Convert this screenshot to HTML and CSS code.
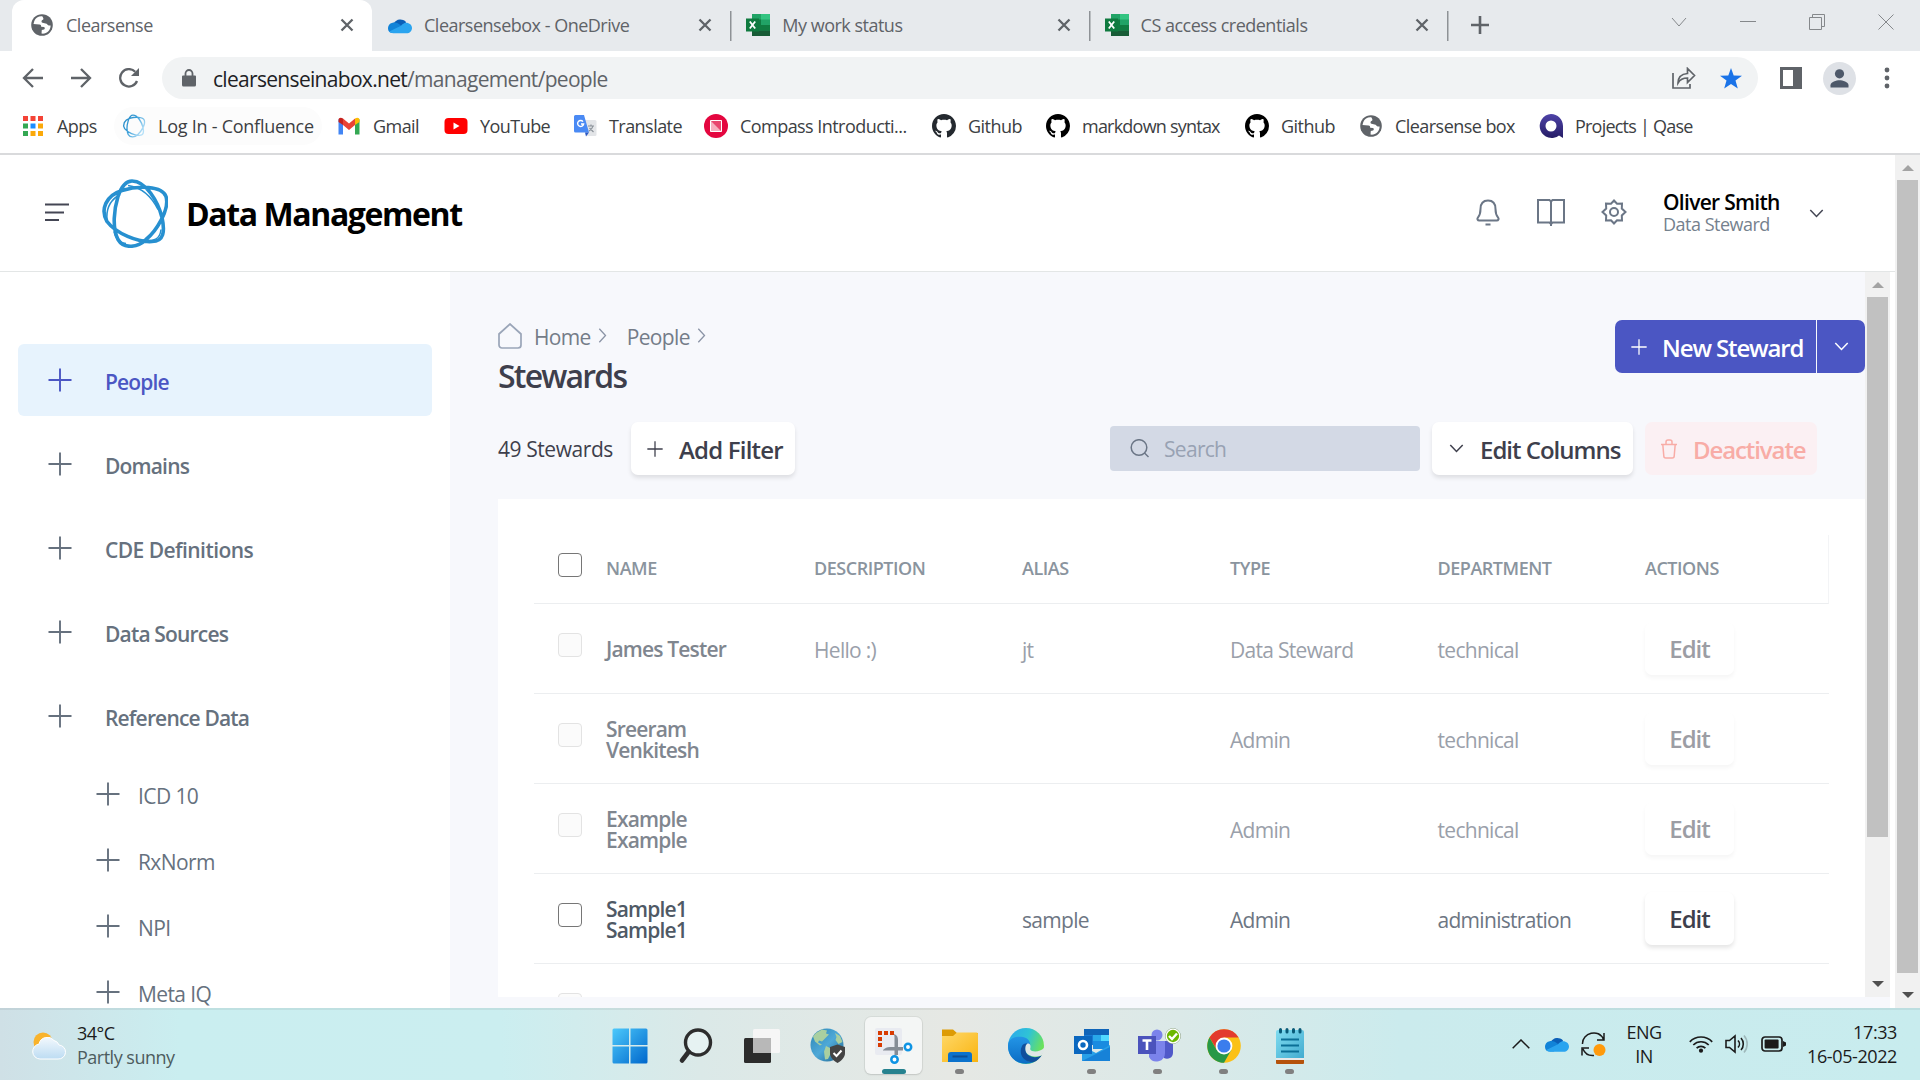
FILE: index.html
```html
<!DOCTYPE html>
<html lang="en">
<head>
<meta charset="utf-8">
<title>Clearsense</title>
<link rel="stylesheet" href="styles.css">
</head>
<body>
<svg class="defs" width="0" height="0" aria-hidden="true">
  <defs>
    <linearGradient id="g-win" x1="0" y1="0" x2="1" y2="1"><stop offset="0" stop-color="#4cc9fb"/><stop offset="1" stop-color="#0067cc"/></linearGradient>
    <linearGradient id="g-folder" x1="0" y1="0" x2="1" y2="1"><stop offset="0" stop-color="#ffd869"/><stop offset="1" stop-color="#f9b410"/></linearGradient>
    <linearGradient id="g-edge" x1="0" y1="0" x2="1" y2=".4"><stop offset="0" stop-color="#2aa6ee"/><stop offset=".55" stop-color="#2fc3d6"/><stop offset="1" stop-color="#6be25a"/></linearGradient>
    <linearGradient id="g-edge2" x1="0" y1="0" x2="0" y2="1"><stop offset="0" stop-color="#2395e6"/><stop offset="1" stop-color="#0b6cc4"/></linearGradient>
    <linearGradient id="g-globe" x1="0" y1="0" x2="1" y2="1"><stop offset="0" stop-color="#2a84b4"/><stop offset=".5" stop-color="#4fa9d8"/><stop offset="1" stop-color="#1d628c"/></linearGradient>
    <linearGradient id="g-note" x1="0" y1="0" x2="1" y2="1"><stop offset="0" stop-color="#7fdcf0"/><stop offset="1" stop-color="#43acd0"/></linearGradient>
    <linearGradient id="g-qase" x1="0" y1="0" x2="0" y2="1"><stop offset="0" stop-color="#4e43a8"/><stop offset="1" stop-color="#261d66"/></linearGradient>
    <linearGradient id="g-cloud" x1="0" y1="0" x2="0" y2="1"><stop offset="0" stop-color="#f3f8fd"/><stop offset="1" stop-color="#bcdcf2"/></linearGradient>
    <linearGradient id="g-ring" x1="0" y1="0" x2="1" y2=".6"><stop offset="0" stop-color="#2287c4"/><stop offset=".5" stop-color="#3d9fd8"/><stop offset="1" stop-color="#b5e0f8"/></linearGradient>
    <symbol id="i-globe" viewBox="0 0 24 24"><circle cx="12" cy="12" r="10.8" fill="#5f6368"/><path d="M12.5 3.4C9 2.8 5.500 5 4.300 8L3.500 11l6 .6c1.500.2 1.800 1 1.600 2.200l2.900.2c1 .2 1.200 2 0 2.400l-2.200.6-.3 3.600c5 .8 9.300-3.600 9.100-8.100l-2-.1c-1-.2-1.400-1.600-3-1.800l-3.100-.8c-1.600-.6-1.200-2.700.4-3.100 1-.4.6-1.600-.4-3.300z" fill="#fff"/></symbol>
    <symbol id="i-x" viewBox="0 0 14 14"><path d="M1.500 1.500l11 11M12.500 1.500l-11 11" stroke="#5f6368" stroke-width="2.300"/></symbol>
    <symbol id="i-cloud" viewBox="0 0 24 16"><path d="M6 5.500A7 6 0 0 1 18 4.500L16 11H5z" fill="#0a5fb8"/><path d="M0 11C0 7 3 5 6.500 5c2.500 0 4 1 6.500 3l-4 7.500H5C2 15.500 0 14 0 11z" fill="#1183d8"/><path d="M18 5.200c3.500 0 6 2.300 6 5.200 0 3-2.300 5.300-5.500 5.300H5.200c-1.800 0-3-.5-3.900-1.600L13 8.300c1.500-1.800 3-3.100 5-3.100z" fill="#2aa4ef"/></symbol>
    <symbol id="i-excel" viewBox="0 0 24 22"><path d="M6 0h18v22H6z" fill="#21a366"/><path d="M15 0h9v5.500h-9z" fill="#33c481"/><path d="M6 5.500h9V11H6z" fill="#107c41"/><path d="M6 11h18v5.500H6z" fill="#107c41"/><path d="M6 16.500h18V22H6z" fill="#185c37"/><path d="M0 4.500h13v13H0z" fill="#0f7a3f"/><path d="M3.800 7.500l5.400 7M9.200 7.500l-5.400 7" stroke="#fff" stroke-width="1.800"/></symbol>
    <symbol id="i-github" viewBox="0 0 16 16"><path d="M8 0C3.580 0 0 3.580 0 8c0 3.540 2.290 6.530 5.470 7.590.4.070.55-.17.55-.38 0-.19-.01-.82-.01-1.490-2.010.37-2.530-.49-2.690-.94-.09-.23-.48-.94-.82-1.130-.28-.15-.68-.52-.01-.53.63-.01 1.080.58 1.230.82.72 1.210 1.870.87 2.330.66.07-.52.28-.87.51-1.070-1.780-.2-3.640-.89-3.640-3.950 0-.87.31-1.590.82-2.150-.08-.2-.36-1.020.08-2.120 0 0 .67-.21 2.200.82.64-.18 1.320-.27 2-.27s1.360.09 2 .27c1.530-1.040 2.200-.82 2.200-.82.44 1.100.16 1.920.08 2.120.51.56.82 1.270.82 2.150 0 3.070-1.870 3.750-3.650 3.950.29.25.54.73.54 1.480 0 1.070-.01 1.930-.01 2.200 0 .21.15.46.55.38A8.010 8.010 0 0 0 16 8c0-4.420-3.580-8-8-8z" fill="currentColor"/></symbol>
    <symbol id="i-plus" viewBox="0 0 24 24"><path d="M12 .5v23M.5 12h23" stroke="currentColor" stroke-width="1.900"/></symbol>
    <symbol id="i-down" viewBox="0 0 14 9"><path d="M.8 1l6.200 6.500L13.200 1" fill="none" stroke="currentColor" stroke-width="1.500"/></symbol>
    <symbol id="i-right" viewBox="0 0 8 15"><path d="M.8.800l6.200 6.700L.8 14.200" fill="none" stroke="currentColor" stroke-width="1.300"/></symbol>
  </defs>
</svg>

<header class="tabs">
  <div class="tab tab-active"><svg width="24" height="24"><use href="#i-globe"/></svg><span class="tab-title">Clearsense</span><svg width="14" height="14"><use href="#i-x"/></svg></div>
  <div class="tab"><svg width="24" height="17"><use href="#i-cloud"/></svg><span class="tab-title">Clearsensebox - OneDrive</span><svg width="14" height="14"><use href="#i-x"/></svg></div>
  <div class="tab tab-sep"><svg width="24" height="22"><use href="#i-excel"/></svg><span class="tab-title">My work status</span><svg width="14" height="14"><use href="#i-x"/></svg></div>
  <div class="tab tab-sep"><svg width="24" height="22"><use href="#i-excel"/></svg><span class="tab-title">CS access credentials</span><svg width="14" height="14"><use href="#i-x"/></svg></div>
  <div class="new-tab"><svg width="18" height="18" viewBox="0 0 18 18"><path d="M9 0v18M0 9h18" stroke="#5f6368" stroke-width="2.600"/></svg></div>
  <div class="win-buttons">
    <svg width="16" height="16" viewBox="0 0 16 16"><path d="M1 4l7 8 7-8"/></svg>
    <svg width="16" height="16" viewBox="0 0 16 16"><path d="M0 7.500h16"/></svg>
    <svg width="16" height="16" viewBox="0 0 16 16"><path d="M.5 3.500h12v12H.5zM3.500 3.500V.5h12v12h-3"/></svg>
    <svg width="16" height="16" viewBox="0 0 16 16"><path d="M.5.500l15 15M15.500.500l-15 15"/></svg>
  </div>
</header>

<div class="toolbar">
  <div class="nav-buttons">
    <svg width="22" height="20" viewBox="0 0 22 20"><path d="M21 10H2M11 1l-9 9 9 9"/></svg>
    <svg width="22" height="20" viewBox="0 0 22 20"><path d="M1 10h19M11 1l9 9-9 9"/></svg>
    <svg width="22" height="20" viewBox="0 0 22 20"><path d="M19 13a8.700 8.700 0 1 1-1.800-9.200"/><path d="M21 0v8h-8z" fill="#5f6368" stroke="none"/></svg>
  </div>
  <div class="omnibox">
    <svg width="14" height="18" viewBox="0 0 14 18"><path d="M1 6.500h12a1 1 0 0 1 1 1V16a1.500 1.500 0 0 1-1.500 1.500h-11A1.500 1.500 0 0 1 0 16V7.500a1 1 0 0 1 1-1z" fill="#5f6368"/><path d="M3.500 7V4.500a3.500 3.500 0 0 1 7 0V7" fill="none" stroke="#5f6368" stroke-width="1.800"/></svg>
    <span class="url">clearsenseinabox.net<span class="path">/management/people</span></span>
    <svg width="24" height="22" viewBox="0 0 24 22"><path d="M1 6v15h17v-4M6 16c0-6 4-9 9.500-9.500V1.500l7 7-7 7v-4.500C11 11 8 12.500 6 16z" fill="none" stroke="#5f6368" stroke-width="1.700"/></svg>
    <svg class="star" width="22" height="21" viewBox="0 0 22 21"><path d="M11 0l2.700 7.400 8.300.3-6.500 4.900 2.300 8L11 16l-6.800 4.600 2.300-8L0 7.700l8.300-.3z" fill="#1a73e8"/></svg>
  </div>
  <svg class="panel" width="22" height="22" viewBox="0 0 22 22"><path d="M0 0h22v22H0zM3 3v16h10V3z" fill="#5f6368" fill-rule="evenodd"/></svg>
  <svg class="avatar" width="33" height="33" viewBox="0 0 33 33"><circle cx="16.500" cy="16.500" r="16.500" fill="#dee1e6"/><circle cx="16.500" cy="11.800" r="4.600" fill="#4d5869"/><path d="M7.500 25.500v-2.200c0-3.500 6-5 9-5s9 1.500 9 5v2.200z" fill="#4d5869"/></svg>
  <svg class="dots" width="6" height="22" viewBox="0 0 6 22"><circle cx="3" cy="3" r="2.400"/><circle cx="3" cy="11" r="2.400"/><circle cx="3" cy="19" r="2.400"/></svg>
</div>

<nav class="bookmarks">
  <div class="mark"><svg width="24" height="24" viewBox="0 0 24 24"><path d="M1 2h5v5H1zM8.500 2h5v5h-5zM16 2h5v5h-5z" fill="#f44336"/><path d="M1 9.500h5v5H1zM1 17h5v5H1z" fill="#34a853"/><path d="M8.500 9.500h5v5h-5z" fill="#1a8cff"/><path d="M16 9.500h5v5h-5zM8.500 17h5v5h-5zM16 17h5v5h-5z" fill="#fba90a"/></svg><span>Apps</span></div>
  <div class="mark mark-hover"><svg width="24" height="24" viewBox="-2 -2 70 72"><path d="M30 1.500C44 1.500 56 22 60 38C63 52 62 62 50 62C36 63 14 54 5 42C-2 30 4 16 20 11C36 6 60 6 64 17C68 30 54 52 44 60C36 68 22 70 16 60C10 48 12 30 16 17C19 8 24 1.500 30 1.500Z" fill="none" stroke="url(#g-ring)" stroke-width="4"/></svg><span>Log In - Confluence</span></div>
  <div class="mark"><svg width="24" height="24" viewBox="0 0 24 24"><path d="M1.500 5v15.500H6V10z" fill="#4285f4"/><path d="M22.500 5v15.500H18V10z" fill="#34a853"/><path d="M1.500 6c0-2.500 2.500-3 4.500-1.500v6.500L1.500 8z" fill="#c5221f"/><path d="M22.500 6c0-2.500-2.500-3-4.500-1.500v6.500l4.500-3z" fill="#fbbc04"/><path d="M6 4.500l6 5 6-5V11l-6 5-6-5z" fill="#ea4335"/></svg><span>Gmail</span></div>
  <div class="mark"><svg width="24" height="24" viewBox="0 0 24 24"><rect x=".5" y="4" width="23" height="16" rx="4" fill="#f00"/><path d="M9.500 8.500v7l6-3.500z" fill="#fff"/></svg><span>YouTube</span></div>
  <div class="mark"><svg width="24" height="24" viewBox="0 0 24 24"><path d="M9 6h13a1.500 1.500 0 0 1 1.500 1.500v13A1.500 1.500 0 0 1 22 22h-8z" fill="#e3e5e8"/><path d="M2.500 1H11l5 17.500H2.500A1.500 1.500 0 0 1 1 17V2.500A1.500 1.500 0 0 1 2.500 1z" fill="#4a8af4"/><path d="M12 18.500h4l-3 4z" fill="#2b59c3"/><path d="M10 7.600A3 3 0 1 0 10.600 10H8" fill="none" stroke="#fff" stroke-width="1.400"/><path d="M15 12h6M18 10.500V12M20 12c-.5 2.500-2.500 4-4 5M16.500 14l4 4" stroke="#8b9299" stroke-width="1.200" fill="none"/></svg><span>Translate</span></div>
  <div class="mark"><svg width="24" height="24" viewBox="0 0 24 24"><circle cx="12" cy="12" r="12" fill="#e4063f"/><path d="M6.500 6.500h11v11h-11z" fill="#f7aebf"/><path d="M7 7h10.500v10.500z" fill="#e8466f"/><path d="M6.500 6.500h11v11h-11z" fill="none" stroke="#fff"/></svg><span>Compass Introducti...</span></div>
  <div class="mark"><svg class="gh-soft" width="24" height="24"><use href="#i-github"/></svg><span>Github</span></div>
  <div class="mark"><svg class="gh" width="24" height="24"><use href="#i-github"/></svg><span class="snug">markdown syntax</span></div>
  <div class="mark"><svg class="gh" width="24" height="24"><use href="#i-github"/></svg><span>Github</span></div>
  <div class="mark"><svg width="24" height="24"><use href="#i-globe"/></svg><span>Clearsense box</span></div>
  <div class="mark"><svg width="24" height="24" viewBox="0 0 24 24"><path d="M12 0c6.600 0 12 5 12 12v12l-4-2.500A12 12 0 1 1 12 0zm0 6.500a5.500 5.500 0 1 0 0 11 5.500 5.500 0 0 0 0-11z" fill="url(#g-qase)"/></svg><span class="snug">Projects | Qase</span></div>
</nav>

<main class="page">
  <div class="app">
    <header class="app-header">
      <svg class="menu" width="24" height="20" viewBox="0 0 24 20"><path d="M0 1.500h24M0 9.500h19M0 17h14" stroke="#444654" stroke-width="2"/></svg>
      <svg class="logo" width="67" height="69" viewBox="-1 -.5 67 69"><path d="M30 1.500C44 1.500 56 22 60 38C63 52 62 62 50 62C36 63 14 54 5 42C-2 30 4 16 20 11C36 6 60 6 64 17C68 30 54 52 44 60C36 68 22 70 16 60C10 48 12 30 16 17C19 8 24 1.500 30 1.500Z" fill="none" stroke="#2790d0" stroke-width="3.600"/><path d="M26 6C40 8 50 18 56 30M5 40C4 28 9 20 18 15M12 52C14 60 18 64 24 64M40 61C52 62 58 60 59 50M60 40C64 32 65 26 64 18" fill="none" stroke="#2790d0" stroke-width="1.500"/></svg>
      <h1>Data Management</h1>
      <div class="header-icons">
        <svg width="24" height="27" viewBox="0 0 24 27"><path d="M12 1.500c-5 0-7.500 3.500-7.500 8.500 0 5-.8 6.500-2.600 8.600-1 1.200-.3 2.900 1.300 2.900h17.600c1.600 0 2.300-1.700 1.300-2.900-1.800-2.100-2.600-3.600-2.600-8.600 0-5-2.500-8.500-7.500-8.500zM9.500 25.500h5"/></svg>
        <svg width="28" height="28" viewBox="0 0 28 28"><path d="M1 2h11.500L14 3.500 15.500 2H27v22.500H15.500L14 26l-1.500-1.500H1zM14 3v25"/></svg>
        <svg width="26" height="26" viewBox="0 0 26 26"><path d="M13 1.500l3 3.200 5-.2-.2 5L24.500 13l-3.700 3.500.2 5-5-.2-3 3.200-3-3.200-5 .2.200-5L1.500 13l3.700-3.500-.2-5 5 .2z"/><circle cx="13" cy="13" r="4"/></svg>
      </div>
      <div class="user"><strong>Oliver Smith</strong><span>Data Steward</span></div>
      <svg class="user-caret" width="15" height="9"><use href="#i-down"/></svg>
    </header>
    <div class="app-body">
      <aside class="sidebar">
        <a class="nav nav-active"><svg width="24" height="24"><use href="#i-plus"/></svg><span>People</span></a>
        <a class="nav"><svg width="24" height="24"><use href="#i-plus"/></svg><span>Domains</span></a>
        <a class="nav"><svg width="24" height="24"><use href="#i-plus"/></svg><span class="airy">CDE Definitions</span></a>
        <a class="nav"><svg width="24" height="24"><use href="#i-plus"/></svg><span>Data Sources</span></a>
        <a class="nav"><svg width="24" height="24"><use href="#i-plus"/></svg><span>Reference Data</span></a>
        <a class="sub"><svg width="24" height="24"><use href="#i-plus"/></svg><span>ICD 10</span></a>
        <a class="sub"><svg width="24" height="24"><use href="#i-plus"/></svg><span>RxNorm</span></a>
        <a class="sub"><svg width="24" height="24"><use href="#i-plus"/></svg><span>NPI</span></a>
        <a class="sub"><svg width="24" height="24"><use href="#i-plus"/></svg><span>Meta IQ</span></a>
      </aside>
      <section class="content">
        <div class="content-head">
          <div>
            <div class="crumbs">
              <svg class="home" width="24" height="26" viewBox="0 0 24 26"><path d="M1 11L12 1l11 10v11a3 3 0 0 1-3 3H4a3 3 0 0 1-3-3z" fill="none" stroke="#9aa5b8" stroke-width="1.700"/></svg>
              <span>Home</span><svg class="sep" width="9" height="15"><use href="#i-right"/></svg>
              <span class="second">People</span><svg class="sep" width="9" height="15"><use href="#i-right"/></svg>
            </div>
            <h2>Stewards</h2>
          </div>
          <div class="split">
            <button class="main-action"><svg width="16" height="16"><use href="#i-plus"/></svg><span>New Steward</span></button>
            <button class="more"><svg width="15" height="9"><use href="#i-down"/></svg></button>
          </div>
        </div>
        <div class="tools">
          <span class="count">49 Stewards</span>
          <button class="btn add"><svg width="16" height="16"><use href="#i-plus"/></svg><span>Add Filter</span></button>
          <div class="search"><svg width="20" height="19" viewBox="0 0 20 19"><circle cx="9" cy="8.500" r="7.800"/><path d="M14.500 14l4 4"/></svg><span>Search</span></div>
          <button class="btn columns"><svg width="15" height="9"><use href="#i-down"/></svg><span>Edit Columns</span></button>
          <button class="btn deactivate"><svg width="16" height="20" viewBox="0 0 16 20"><path d="M0 5.500h16M5 5V3a2 2 0 0 1 2-2h2a2 2 0 0 1 2 2v2M1.800 5.500l1 11.500a2 2 0 0 0 2 2h6.400a2 2 0 0 0 2-2l1-11.500"/></svg><span>Deactivate</span></button>
        </div>
        <div class="card">
          <div class="row row-head"><i class="check"></i><span>NAME</span><span>DESCRIPTION</span><span>ALIAS</span><span>TYPE</span><span>DEPARTMENT</span><span>ACTIONS</span></div>
          <div class="row off"><i class="check"></i><b>James Tester</b><span>Hello :)</span><span>jt</span><span>Data Steward</span><span>technical</span><button class="edit">Edit</button></div>
          <div class="row off"><i class="check"></i><b>Sreeram<br>Venkitesh</b><span></span><span></span><span>Admin</span><span>technical</span><button class="edit">Edit</button></div>
          <div class="row off"><i class="check"></i><b>Example<br>Example</b><span></span><span></span><span>Admin</span><span>technical</span><button class="edit">Edit</button></div>
          <div class="row"><i class="check"></i><b>Sample1<br>Sample1</b><span></span><span>sample</span><span>Admin</span><span>administration</span><button class="edit">Edit</button></div>
          <div class="row off"><i class="check"></i></div>
        </div>
      </section>
      <div class="scroll scroll-inner"><i class="arrow-up"></i><i class="thumb"></i><i class="arrow-down"></i></div>
    </div>
  </div>
  <div class="scroll scroll-outer"><i class="arrow-up"></i><i class="thumb"></i><i class="arrow-down"></i></div>
</main>

<footer class="taskbar">
  <div class="weather">
    <svg width="34" height="28" viewBox="0 0 34 28"><circle cx="11" cy="10" r="9.500" fill="#f9b32c"/><path d="M8 27a7.500 7.500 0 0 1-1-14.900A8.500 8.500 0 0 1 22 8.500a7 7 0 0 1 5 4.500 7 7 0 0 1-1 14z" fill="url(#g-cloud)" stroke="#fff" stroke-width="1"/></svg>
    <div><span class="temp">34°C</span><span class="sky">Partly sunny</span></div>
  </div>
  <div class="apps">
    <div class="task"><svg width="36" height="36" viewBox="0 0 36 36"><path d="M2 .500h15v16.500H.5V2A1.500 1.500 0 0 1 2 .500zM18.500.500H34A1.500 1.500 0 0 1 35.500 2v15h-17zM.5 18.500H17v17H2A1.500 1.500 0 0 1 .5 34zM18.500 18.500h17V34a1.500 1.500 0 0 1-1.500 1.500H18.500z" fill="url(#g-win)"/></svg></div>
    <div class="task"><svg width="36" height="36" viewBox="0 0 36 36"><circle cx="20" cy="14.500" r="12.500" fill="#e6f2f2" stroke="#2d2d2d" stroke-width="3.400"/><path d="M10.500 24l-6.500 8.500" stroke="#2d2d2d" stroke-width="4.600" stroke-linecap="round"/></svg></div>
    <div class="task"><svg width="36" height="36" viewBox="0 0 36 36"><rect x="0" y="10" width="27" height="25" rx="1.500" fill="#2c2c2c"/><rect x="9" y="1" width="27" height="24" rx="1.500" fill="#f6f6f6"/><path d="M9 10h18v15H9z" fill="#b8b8b8"/></svg></div>
    <div class="task"><svg width="36" height="36" viewBox="0 0 36 36"><circle cx="17" cy="17" r="16.500" fill="url(#g-globe)"/><path d="M6 5l6-3.500 5 1-1 3 3 1-4 4-3 3-3-1-1 2 4 2-2 1-5-4-2-5z" fill="#a9cfa0"/><path d="M16 18l6 3-1 4-3 6-3 .5-1-8z" fill="#a9cfa0"/><path d="M25 5l5 3 2.500 6-4 2-3-4 1-3z" fill="#a9cfa0"/><path d="M20 19l7.500-2.500L35 19v6c0 4-3 7.500-7.500 10C23 32.500 20 29 20 25z" fill="#444"/><path d="M23.500 25l3 3 5-5.500" fill="none" stroke="#fff" stroke-width="2"/></svg></div>
    <div class="task task-active"><svg width="38" height="36" viewBox="0 0 38 36"><rect x="0" y="0" width="27" height="27" rx="2" fill="#e9ebf1"/><path d="M3 3h4v4H3zM9 3h4v4H9zM15 3h4v4h-4zM3 9h4v4H3zM3 15h4v4H3z" fill="#d83b01"/><path d="M19 6c3 1 4 3 4 6v15h-3.500V9zM8 22c2-2 4-3 7-3h13v3.500H8z" fill="#858c95"/><circle cx="33" cy="19" r="3.200" fill="#fff" stroke="#0f94e4" stroke-width="2.500"/><circle cx="19.500" cy="31.500" r="3.200" fill="#fff" stroke="#0f94e4" stroke-width="2.500"/></svg></div>
    <div class="task running"><svg width="36" height="36" viewBox="0 0 36 36"><path d="M0 1.500h11L15 5h21v5H0z" fill="#dd9b05"/><path d="M0 8h11l4-3.500h19.500A1.500 1.500 0 0 1 36 6v28H0z" fill="url(#g-folder)"/><path d="M6 34V27a3 3 0 0 1 3-3h18a3 3 0 0 1 3 3v7z" fill="#0b72cc"/><path d="M10.500 28.500h15" stroke="#0b4f96" stroke-width="2"/></svg></div>
    <div class="task"><svg width="36" height="36" viewBox="0 0 36 36"><circle cx="18" cy="18" r="18" fill="url(#g-edge)"/><path d="M0 18C0 10 8 8 15 9c5 1 8 5 7 9-7-3-10 4-7 10 3 6 8 6 11 6C15 39 0 33 0 18z" fill="url(#g-edge2)"/><path d="M14 18c-4 8 2 17 12 16 3-1 6-4 8-7-6 4-14 2-16-3-1-3 0-6 2-8-3-1-5 0-6 2z" fill="#104f9c"/><path d="M18 24c2 4 10 6 15.500 3.500L36 24V20c-3 3-8 4-12 3-2-1-2-2-1.500-3.500C23 16 21 15 19.500 15.500 17 17 17 21 18 24z" fill="#dfe7e6"/></svg></div>
    <div class="task running"><svg width="36" height="36" viewBox="0 0 36 36"><path d="M10 1h25v16H10z" fill="#0f64b8"/><path d="M10 7h9v10h-9z" fill="#1979d4"/><path d="M19 7h8v6h-8z" fill="#28a8ea"/><path d="M27 7h8v6h-8z" fill="#50d9ff"/><path d="M19 13h16v8H19z" fill="#1a8be0"/><path d="M8 18l14 7 14-8v16H8z" fill="#28a0e8"/><path d="M8 33l28-14v14z" fill="#1782d8"/><path d="M0 8h18v18H0z" fill="#0a67bf"/><circle cx="9" cy="17" r="4" fill="none" stroke="#fff" stroke-width="2.600"/></svg></div>
    <div class="task running teams"><svg width="44" height="36" viewBox="0 0 44 36"><circle cx="19" cy="7" r="5.500" fill="#7b83eb"/><path d="M24 13h11v12a6 6 0 0 1-9 5z" fill="#5059c9"/><path d="M11 13h16v12a8.500 8.500 0 0 1-16 4z" fill="#7b83eb"/><path d="M0 8h18v18H0z" fill="#4b53bc"/><path d="M4.500 12.500h9M9 12.500v9.500" stroke="#fff" stroke-width="2.600"/><circle cx="35" cy="8" r="7.500" fill="#6bb700" stroke="#8d9a90" stroke-width=".8"/><circle cx="35" cy="8" r="6.800" fill="#6bb700" stroke="#fff" stroke-width="1.300"/><path d="M31 8l3 3 5-5.500" fill="none" stroke="#fff" stroke-width="2.400"/></svg></div>
    <div class="task running"><svg width="36" height="36" viewBox="0 0 36 36"><circle cx="18" cy="18" r="16.800" fill="#fbc116"/><path d="M18 9.600h14.600A16.800 16.800 0 0 0 3.500 9.600L11 22z" fill="#e33b2e"/><path d="M3.500 9.600A16.800 16.800 0 0 0 18 34.800L25.300 22 10.700 22z" fill="#279847"/><circle cx="18" cy="18" r="8.400" fill="#fff"/><circle cx="18" cy="18" r="6.600" fill="#3b7ded"/></svg></div>
    <div class="task running"><svg width="36" height="36" viewBox="0 0 36 36"><path d="M4 32h28v3a1 1 0 0 1-1 1H5a1 1 0 0 1-1-1z" fill="#b5530c"/><path d="M4 29h28v3H4z" fill="#e8e8e8"/><path d="M4 4a2 2 0 0 1 2-2h24a2 2 0 0 1 2 2v26H4z" fill="url(#g-note)"/><path d="M9 11.500h18M9 17.500h18M9 23.500h18" stroke="#0b6f96" stroke-width="2"/><path d="M8.500 1.500v2.500M15 1.500v2.500M21.500 1.500v2.500M28 1.500v2.500" stroke="#085a78" stroke-width="3" stroke-linecap="round"/></svg></div>
  </div>
  <div class="tray">
    <svg width="18" height="10" viewBox="0 0 18 10"><path d="M.7 9.300L9 1l8.300 8.300" fill="none" stroke="#1b1b1b" stroke-width="1.500"/></svg>
    <svg class="drive" width="24" height="16"><use href="#i-cloud"/></svg>
    <svg class="sync" width="25" height="26" viewBox="0 0 25 26"><path d="M1.500 13C1 2 18-3 22.500 8.500M23 2v7h-7M1 24.500V17h7M2 18c2 5 6 7 11 6.500" fill="none" stroke="#1b1b1b" stroke-width="1.500"/><circle cx="18.500" cy="19" r="6" fill="#ff9a0c"/></svg>
    <div class="lang"><span>ENG</span><span>IN</span></div>
    <svg class="wifi" width="24" height="18" viewBox="0 0 24 18"><g fill="none" stroke="#1b1b1b" stroke-width="1.700"><path d="M.8 6.800a15.500 15.500 0 0 1 22.400 0M4.300 10a10.800 10.800 0 0 1 15.400 0M7.600 13.200a6.200 6.200 0 0 1 8.800 0"/></g><circle cx="12" cy="15.700" r="2.100" fill="#1b1b1b"/></svg>
    <svg class="sound" width="24" height="20" viewBox="0 0 24 20"><g fill="none" stroke="#1b1b1b" stroke-width="1.600"><path d="M1 6.500h3.500L10 2v16l-5.500-4.500H1zM13 6.500a5 5 0 0 1 0 7M16 4a9 9 0 0 1 0 12"/><path d="M19 1.500a13 13 0 0 1 0 17" stroke="#9fb9bb"/></g></svg>
    <svg class="battery" width="25" height="16" viewBox="0 0 25 16"><rect x="1" y="1" width="20" height="14" rx="3" fill="none" stroke="#1b1b1b" stroke-width="1.700"/><rect x="3.600" y="3.600" width="14" height="8.800" rx="1" fill="#1b1b1b"/><path d="M22 5l3 1.500v3L22 11z" fill="#1b1b1b"/></svg>
    <div class="clock"><span>17:33</span><span>16-05-2022</span></div>
  </div>
</footer>
</body>
</html>
```
FILE: styles.css
```css
* { box-sizing: border-box; }
body {
  margin: 0;
  width: 1920px;
  height: 1080px;
  overflow: hidden;
  display: flex;
  flex-direction: column;
  background: #fff;
  font-family: "Open Sans", sans-serif;
  font-size: 18px;
  white-space: nowrap;
}
.defs { position: absolute; }
svg { flex: none; display: block; }
button { font: inherit; border: 0; padding: 0; margin: 0; }

/* browser tabs */
.tabs { display: flex; height: 51px; background: #e7eaed; padding-left: 12px; }
.tab { display: flex; align-items: center; width: 358.300px; padding: 0 18px 1px 16px; color: #5f6368; letter-spacing: -.5px; }
.tab > :first-child { margin-right: 12px; }
.tab-title { flex: 1; }
.tab-active { width: 360px; padding-left: 18px; background: #fff; border-radius: 12px 12px 0 0; }
.tab-sep { background: linear-gradient(#8e9296, #8e9296) 0 11px / 1.500px 30px no-repeat; }
.new-tab { display: flex; align-items: center; padding: 0 0 1px 24px; background: linear-gradient(#8e9296, #8e9296) 0 11px / 1.500px 30px no-repeat; }
.win-buttons { display: flex; gap: 53px; margin-left: auto; padding: 14px 26px 0 0; }
.win-buttons path { fill: none; stroke: #85888b; }

/* address bar */
.toolbar { display: flex; align-items: center; height: 54px; padding: 0 30px 0 22px; }
.nav-buttons { display: flex; gap: 26px; width: 140px; }
.nav-buttons svg { fill: none; stroke: #5f6368; stroke-width: 2.300px; }
.omnibox { display: flex; align-items: center; width: 1596px; height: 42px; padding: 0 16px 0 20px; border-radius: 21px; background: #f1f3f4; }
.url { flex: 1; padding: 1px 0 0 17px; font-size: 21px; letter-spacing: -.69px; color: #202124; }
.path { color: #5f6368; }
.star { margin-left: 24px; }
.panel { margin-left: 22px; }
.avatar { margin-left: 21px; }
.dots { margin-left: 28px; fill: #5f6368; }

/* bookmarks */
.bookmarks { display: grid; grid-template-columns: 100px 215px 107px 129px 131px 228px 114px 199px 114px 180px 160px; align-items: center; height: 50px; padding: 0 0 7px 22px; border-bottom: 2px solid #d9dadc; color: #3c4043; flex: none; }
.mark { display: flex; align-items: center; gap: 12px; letter-spacing: -.55px; }
.mark:first-child { gap: 11px; }
.mark-hover { height: 38px; width: 208px; margin-left: -8px; padding-left: 8px; border-radius: 19px; background: #fcfcfc; letter-spacing: -.25px; }
.snug { letter-spacing: -.78px; }
.gh-soft { color: #24292f; }
.gh { color: #000; }

/* web page frame */
.page { display: flex; height: 853px; }
.app { flex: 1; width: 1895px; }
.app-header { display: flex; align-items: center; height: 117px; padding-left: 45px; border-bottom: 1px solid #e3e6e6; }
.logo { margin-left: 32px; }
.app-header h1 { width: 1290px; margin: 1px 0 0 18px; font-size: 32px; font-weight: 700; letter-spacing: -1.400px; color: #000; }
.header-icons { display: flex; align-items: center; justify-content: space-between; width: 151px; margin-bottom: 2px; }
.header-icons svg { fill: none; stroke: #6b7686; stroke-width: 2px; }
.user { display: flex; flex-direction: column; width: 146px; margin: 0 0 1px 36px; line-height: 22px; }
.user strong { font-size: 21px; font-weight: 600; letter-spacing: -.7px; color: #000; }
.user span { color: #75818d; letter-spacing: -.5px; }
.app-header .user-caret { color: #444654; }
.app-body { display: flex; height: 736px; }

/* sidebar */
.sidebar { width: 450px; padding: 72px 18px 0; overflow: hidden; }
.nav, .sub { display: flex; align-items: center; font-size: 21px; color: #66717e; letter-spacing: -.6px; }
.nav { height: 72px; margin-bottom: 12px; padding-left: 30px; gap: 33px; border-radius: 6px; font-weight: 600; letter-spacing: -.83px; }
.airy { letter-spacing: -.56px; }
.nav-active { background: #e7f3fd; color: #4b56c3; }
.sub { height: 66px; padding-left: 78px; gap: 18px; }
.nav + .sub { margin-top: -3px; }
.nav span, .sub span { padding-top: 3px; }

/* content */
.content { width: 1415px; padding: 48px 0 11px 48px; background: #f7f8fc; }
.content-head { display: flex; justify-content: space-between; height: 102px; }
.crumbs { display: flex; align-items: center; height: 32px; font-size: 21px; color: #747c88; letter-spacing: -.65px; }
.crumbs span { padding-top: 1px; }
.crumbs .home { margin-right: 12px; }
.crumbs .sep { margin-left: 7px; margin-bottom: 2px; color: #8b94a6; }
.crumbs .second { margin-left: 20px; }
.content h2 { margin: 1px 0 0; font-size: 32px; line-height: 45px; font-weight: 600; letter-spacing: -1.800px; color: #3e3f4c; }
.split { display: flex; height: 53px; color: #fff; font-size: 24px; font-weight: 600; }
.split button { display: flex; align-items: center; background: #4b56c3; color: #fff; }
.main-action { width: 201px; padding-left: 16px; gap: 15px; border-radius: 7px 0 0 7px; letter-spacing: -1.120px; }
.split span, .btn span { padding-top: 1px; }
.more { width: 48px; margin-left: 1px; padding-left: 17px; border-radius: 0 7px 7px 0; }
.tools { display: flex; align-items: center; height: 53px; padding-right: 48px; }
.count { width: 133px; font-size: 21px; color: #3e3f4c; letter-spacing: -.43px; font-weight: 500; padding-top: 1px; }
.btn { display: flex; align-items: center; height: 53px; background: #fff; border-radius: 7px; color: #3e3f4c; font-size: 24px; font-weight: 600; letter-spacing: -1px; box-shadow: 0 3px 4px rgba(0, 0, 0, .1); }
.add { width: 164px; padding-left: 16px; gap: 16px; letter-spacing: -.800px; }
.search { display: flex; align-items: center; width: 310px; height: 45px; margin-left: auto; padding-left: 20px; gap: 14px; border-radius: 4px; background: #d3d9e5; color: #98a2b3; font-size: 21px; letter-spacing: -.7px; }
.search span { padding-top: 1px; }
.search svg { fill: none; stroke: #6b7686; stroke-width: 1.500px; }
.columns { width: 201px; margin-left: 12px; padding-left: 17px; gap: 16px; }
.deactivate { width: 172px; margin-left: 12px; padding-left: 16px; gap: 16px; background: #fbf0f3; color: #f8aca6; box-shadow: none; letter-spacing: -1.100px; }
.deactivate svg { fill: none; stroke: #f8aca6; stroke-width: 1.500px; }
.card { height: 498px; margin-top: 24px; padding: 36px 36px 0; background: #fff; overflow: hidden; }
.row { display: grid; grid-template-columns: 72px 208px 208px 208px 207.500px 207.500px 184px; align-items: center; height: 90.100px; width: 1295px; border-bottom: 1px solid #eceef0; font-size: 21px; line-height: 21px; color: #6d7683; letter-spacing: -.7px; }
.row span { padding-top: 3px; }
.row-head { height: 69px; padding-bottom: 2px; border-right: 1px solid #f3f4f6; font-size: 18px; font-weight: 600; color: #8a949e; letter-spacing: -.47px; }
.row-head span { padding-top: 1px; }
.check { width: 24px; height: 24px; margin: 0 0 8px 24px; border: 1.500px solid #767676; border-radius: 4px; background: #fff; }
.row-head .check { margin-bottom: 6px; }
.row b { width: 130px; padding-top: 2px; font-weight: 600; color: #4f5965; letter-spacing: -.83px; }
.edit { width: 89px; height: 53px; margin-bottom: 1px; border-radius: 7px; background: #fff; color: #3e3f4c; font-size: 24px; font-weight: 600; letter-spacing: -1px; box-shadow: 0 3px 4px rgba(0, 0, 0, .1); }
.off { color: #9aa0aa; }
.off b { color: #7f868f; }
.off .check { border-color: #e3e3e3; background: #fbfbfb; }
.off .edit { color: #9c9da4; box-shadow: 0 3px 4px rgba(0, 0, 0, .04); }

/* scrollbars */
.scroll { display: flex; flex-direction: column; align-items: center; width: 25px; background: #f1f1f1; }
.scroll-inner { height: 725px; box-shadow: 0 11px #f7f8fc; }
.thumb { width: 21px; background: #c1c1c1; }
.scroll-inner .thumb { height: 540px; margin-top: 9px; }
.scroll-outer .thumb { height: 793px; margin-top: 9px; }
.arrow-up, .arrow-down { border: 6px solid transparent; }
.arrow-up { border-top: 0; border-bottom-color: #a3a3a3; margin-top: 10px; }
.arrow-down { border-bottom: 0; border-top-color: #505050; margin: auto 0 10px; }

/* taskbar */
.taskbar { display: flex; height: 72px; padding-top: 2px; border-top: 2px solid rgba(0, 0, 0, .06); background: linear-gradient(90deg, #cfe0e6 0, #caeef0 180px, #cbeef0 500px, #dbe9e8 700px, #e6e8e4 950px, #dbe9e8 1180px, #cbebed 1400px, #c8ecee 1920px) border-box; line-height: 24px; color: #1b1b1b; letter-spacing: -.5px; }
.weather { display: flex; width: 601px; padding-left: 32px; gap: 11px; }
.weather svg { margin-top: 20px; }
.weather div { display: flex; flex-direction: column; padding-top: 9px; }
.sky { color: #4d5c5e; }
.apps { display: flex; gap: 9px; margin-top: 5px; }
.task { display: flex; flex-direction: column; align-items: center; justify-content: space-between; width: 57px; height: 57px; padding-top: 11px; }
.running::after { content: ""; width: 9px; height: 5px; border-radius: 2.500px; background: #808080; }
.task-active { border-radius: 6px; background: #f4f6f5; box-shadow: 0 0 0 1px rgba(0, 0, 0, .05), 0 1px 2px rgba(0, 0, 0, .1); }
.task-active::after { content: ""; width: 24px; height: 5px; border-radius: 2.500px; background: #26828f; }
.teams svg { margin-left: 5px; }
.tray { display: flex; align-items: center; margin-left: auto; padding: 0 23px 4px 0; }
.drive { margin-left: 15px; }
.sync { margin-left: 12px; }
.lang { display: flex; flex-direction: column; align-items: center; width: 36px; margin-left: 20px; }
.wifi { margin-left: 27px; }
.sound { margin-left: 12px; }
.battery { margin-left: 12px; }
.clock { display: flex; flex-direction: column; align-items: flex-end; width: 92px; margin-left: 19px; letter-spacing: -.4px; }
```
